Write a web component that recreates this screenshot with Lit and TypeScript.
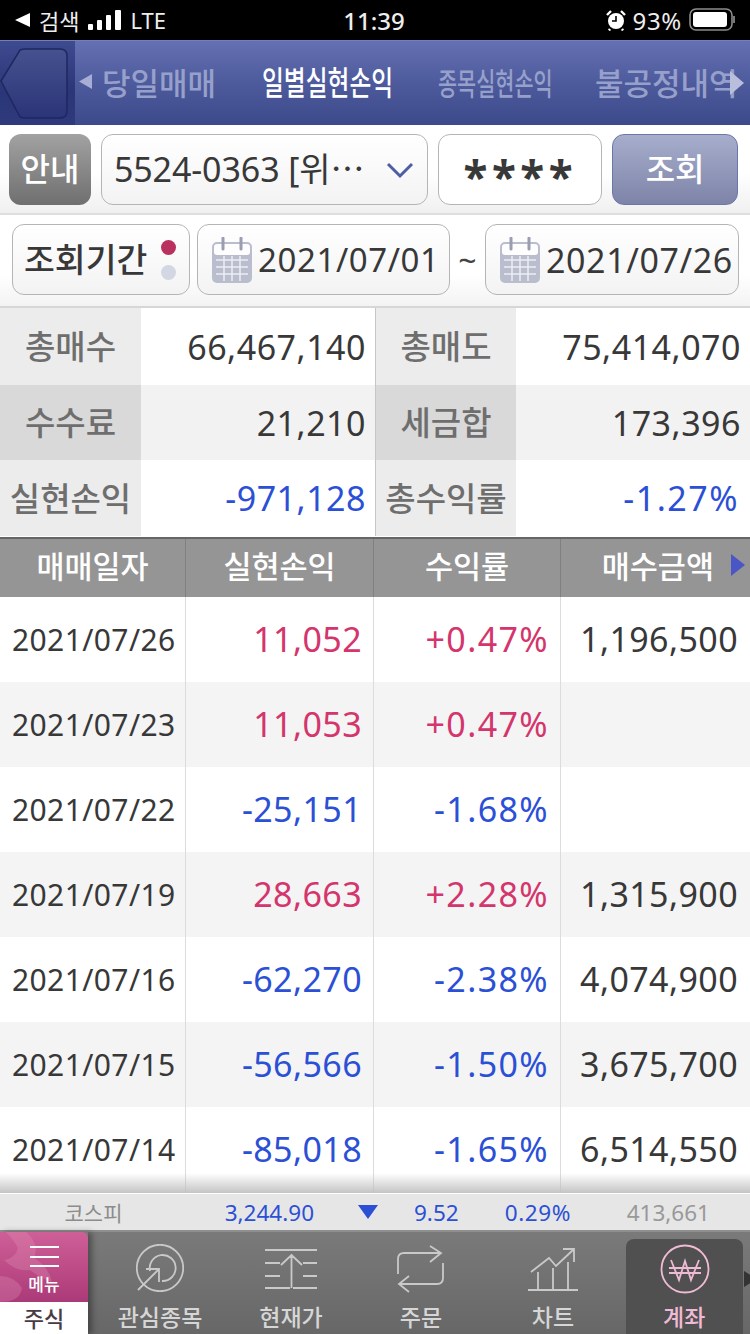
import { LitElement, css, html, svg } from "lit";
import { customElement } from "lit/decorators.js";

const summary = [
  ["총매수", "66,467,140", "", "총매도", "75,414,070", ""],
  ["수수료", "21,210", "", "세금합", "173,396", ""],
  ["실현손익", "-971,128", "down", "총수익률", "-1.27%", "down pc"],
];

const rows = [
  ["2021/07/26", "11,052", "+0.47%", "1,196,500"],
  ["2021/07/23", "11,053", "+0.47%", ""],
  ["2021/07/22", "-25,151", "-1.68%", ""],
  ["2021/07/19", "28,663", "+2.28%", "1,315,900"],
  ["2021/07/16", "-62,270", "-2.38%", "4,074,900"],
  ["2021/07/15", "-56,566", "-1.50%", "3,675,700"],
  ["2021/07/14", "-85,018", "-1.65%", "6,514,550"],
];

const calendar = html`<svg class="cal" width="40" height="46" viewBox="0 0 40 46">
  <rect x="0" y="5" width="40" height="41" rx="5" fill="#b9bdcd"></rect>
  <rect x="2" y="7" width="36" height="11" rx="3" fill="#fdfdfd"></rect>
  <path d="M4 23H36M4 30H36M4 37H36M12 19V44M20 19V44M28 19V44" stroke="#eceef3" stroke-width="1.5"></path>
  <path d="M11 1V12M29 1V12" stroke="#9a9eb0" stroke-width="3" stroke-linecap="round"></path>
</svg>`;

const navIcons = {
  watch: svg`<circle cx="24" cy="24" r="23.2"></circle>
    <path d="M14 27A13 13 0 1 1 26 37"></path>
    <path d="M2 46L22 26M10 25H23V38"></path>`,
  price: svg`<path d="M0 1H52M0 39H25M28 39H52M0 14H15M0 27H15M38 14H52M38 27H52M26.500 5V39M16 16L26.500 6L37 16"></path>`,
  order: svg`<path d="M33 1L44 8L33 17M44 8H7Q1 8 1 14V29M12 47L2 39L12 31M2 39H40Q46 39 46 33V18"></path>`,
  chart: svg`<path d="M0 42H50M10 42V24M25 42V20M40 42V14M3 24L21 10L28 18L45 2M35 1H46V14"></path>`,
};

@customElement("app-root")
export class AppRoot extends LitElement {
  static styles = css`
    :host {
      display: flex;
      flex-direction: column;
      width: 750px;
      height: 1334px;
      overflow: hidden;
      background: #fff;
      color: #383838;
      font-family: "Noto Sans", "Noto Sans CJK KR", sans-serif;
    }
    .status {
      height: 40px;
      flex: none;
      background: #000;
      color: #eee;
      display: grid;
      grid-template-columns: 1fr auto 1fr;
      align-items: center;
      padding: 0 13px 0 15px;
      font-size: 22px;
    }
    .status-left, .status-right { display: flex; align-items: center; }
    .status-left { gap: 7px; }
    .status-right { justify-content: flex-end; gap: 7px; }
    .search { font-size: 22px; margin: 0 2px 0 2px; }
    .lte { font-size: 22px; margin-left: 1px; }
    .time { font-size: 24px; font-weight: 500; margin-left: -4px; }
    .pct { font-size: 24px; letter-spacing: 0.7px; }
    .tabs {
      height: 85px;
      flex: none;
      display: flex;
      align-items: center;
      background: linear-gradient(#6470b2, #4d5a9c 50%, #3c4a8b);
      border-top: 1px solid #7480bb;
      box-sizing: border-box;
      overflow: hidden;
    }
    .back {
      width: 75px;
      height: 100%;
      flex: none;
      background: linear-gradient(#3f4b8f, #2b3678 60%, #2e3a7c);
    }
    .tab {
      display: flex;
      align-items: center;
      white-space: nowrap;
      color: #97a0cb;
      font-weight: 500;
      height: 100%;
      padding-bottom: 4px;
      box-sizing: border-box;
    }
    .squeeze { display: inline-block; transform-origin: left center; }
    .tab1 { width: 187px; padding-left: 4px; gap: 10px; font-size: 31px; }
    .tab2 { width: 176px; color: #fff; font-size: 33px; }
    .tab2 .squeeze { transform: scaleX(0.72); }
    .tab3 { width: 157px; font-size: 31px; }
    .tab3 .squeeze { transform: scaleX(0.67); }
    .tab4 { flex: 1; font-size: 31px; position: relative; }
    .tab4 svg { position: absolute; right: 6px; top: 50%; margin-top: -12px; }
    .tri { flex: none; }
    .toolbar {
      height: 90px;
      flex: none;
      box-sizing: border-box;
      display: flex;
      gap: 10px;
      align-items: flex-start;
      padding: 9px 12px 0 9px;
      background: linear-gradient(#fff 55%, #f0f0f0);
      border-bottom: 2px solid #dedede;
    }
    .box {
      box-sizing: border-box;
      height: 71px;
      border: 1px solid #b5b5b5;
      border-radius: 12px;
      background: linear-gradient(#fff, #f3f3f3);
      display: flex;
      align-items: center;
    }
    .info {
      width: 82px;
      justify-content: center;
      border: none;
      color: #fff;
      font-size: 32px;
      font-weight: 500;
      padding-bottom: 6px;
      background: linear-gradient(#a2a2a2, #6f6f6f);
    }
    .account {
      width: 328px;
      padding-left: 12px;
      justify-content: space-between;
      padding-right: 13px;
      font-size: 34px;
    }
    .account span { margin-top: -5px; letter-spacing: -0.1px; }
    .password {
      width: 164px;
      justify-content: center;
      background: #fff;
      font-size: 44px;
      font-weight: 700;
      letter-spacing: 4.5px;
      padding-top: 12px;
    }
    .query {
      width: 126px;
      justify-content: center;
      color: #fff;
      font-size: 32px;
      font-weight: 500;
      padding-bottom: 6px;
      border-color: #6b77a8;
      background: linear-gradient(#a7adcb, #7e84a8);
    }
    .dates {
      height: 93px;
      flex: none;
      box-sizing: border-box;
      display: flex;
      align-items: flex-start;
      padding: 9px 9px 0 12px;
      background: linear-gradient(#fff 65%, #f3f3f3);
      border-bottom: 2px solid #d6d6d6;
    }
    .period {
      width: 178px;
      margin-right: 7px;
      padding-left: 11px;
      gap: 14px;
      font-size: 33.500px;
      font-weight: 500;
    }
    .period span { margin-top: -4px; }
    .dots { display: flex; flex-direction: column; gap: 10px; }
    .dots i { width: 15px; height: 15px; border-radius: 50%; background: #d3d7e3; }
    .dots i:first-child { background: #b9325f; }
    .date {
      width: 254px;
      padding-left: 14px;
      gap: 6px;
      font-size: 34px;
      letter-spacing: 0.6px;
    }
    .date.first { width: 253px; font-size: 33px; }
    .cal { flex: none; }
    .tilde { width: 35px; text-align: center; font-size: 32px; color: #444; padding-top: 14px; }
    .summary {
      height: 229px;
      flex: none;
      display: grid;
      grid-template-columns: 141px 234px 1px 140px 234px;
      grid-template-rows: 77px 75px 76px;
      font-size: 34px;
      letter-spacing: 0.5px;
    }
    .summary > div { display: flex; align-items: center; }
    .label {
      justify-content: center;
      color: #6e6e6e;
      font-size: 33px;
      letter-spacing: 0;
      font-weight: 500;
      background: #ececec;
      padding-bottom: 3px;
      box-sizing: border-box;
    }
    .value { justify-content: flex-end; padding-right: 9px; background: #fff; }
    .value.pc { letter-spacing: 1.5px; padding-right: 11px; }
    .label.even { background: #d9d9d9; }
    .value.even { background: #f2f2f2; }
    .rule { background: #c6c6c6; }
    .down { color: #2b50d6; }
    .up { color: #d3356c; }
    .table { flex: 1; position: relative; overflow: hidden; display: flex; flex-direction: column; }
    .head, .row {
      display: grid;
      grid-template-columns: 186px 188px 187px 189px;
      flex: none;
    }
    .head {
      height: 60px;
      background: #959595;
      color: #fff;
      font-size: 30.5px;
      font-weight: 500;
      border-top: 2px solid #666;
      box-sizing: border-box;
    }
    .head div {
      display: flex;
      align-items: center;
      justify-content: center;
      gap: 17px;
      padding-bottom: 6px;
      border-right: 1px solid #808080;
    }
    .head div:last-child { border: none; justify-content: flex-end; padding-right: 5px; white-space: nowrap; }
    .row { height: 85px; font-size: 34px; letter-spacing: 0.4px; }
    .row:nth-child(odd) { background: #f4f4f4; }
    .row div {
      display: flex;
      align-items: center;
      justify-content: flex-end;
      padding-right: 11px;
      padding-bottom: 1px;
      border-right: 1px solid #dcdcdc;
    }
    .row div:first-child { justify-content: flex-start; padding: 0 0 0 12px; font-size: 30px; }
    .row div:nth-child(3) { letter-spacing: 1.4px; }
    .row div:last-child { border: none; padding-right: 12px; }
    .fade {
      position: absolute;
      left: 0;
      right: 0;
      bottom: 0;
      height: 20px;
      background: linear-gradient(rgba(190, 190, 190, 0), rgba(190, 190, 190, 0.9));
    }
    .ticker {
      height: 39px;
      flex: none;
      box-sizing: border-box;
      display: grid;
      grid-template-columns: 187px 127px 100px 43px 114px 1fr;
      align-items: center;
      background: #e6e6e6;
      border-top: 1px solid #fff;
      border-bottom: 2px solid #8f8f8f;
      font-size: 22.5px;
      color: #2b50d6;
    }
    .ticker span { text-align: right; white-space: nowrap; }
    .ticker span:nth-of-type(4) { letter-spacing: 0.6px; }
    .ticker .name { color: #8c8c8c; font-size: 21px; text-align: center; }
    .ticker .volume { color: #999; padding-right: 40px; }
    .ticker svg { justify-self: center; margin-left: 8px; }
    .nav {
      height: 102px;
      flex: none;
      display: flex;
      background: linear-gradient(#7a7a7a, #676767);
      color: #d6d6d6;
      font-size: 23px;
      font-weight: 500;
    }
    .stock { width: 88px; flex: none; display: flex; flex-direction: column; box-shadow: 4px 0 6px rgba(0, 0, 0, 0.35); }
    .menu {
      flex: 1;
      display: flex;
      flex-direction: column;
      align-items: center;
      padding-top: 14px;
      box-sizing: border-box;
      gap: 9px;
      color: #fff;
      font-size: 17px;
      line-height: 18px;
      border-top-right-radius: 6px;
      background: linear-gradient(#cf5f97, #ab3a78);
      position: relative;
      overflow: hidden;
    }
    .menu i { display: block; width: 29px; height: 21px; border-top: 2px solid #fff; border-bottom: 2px solid #fff; position: relative; box-sizing: border-box; z-index: 1; }
    .menu i::after { content: ""; position: absolute; left: 0; right: 0; top: 7.5px; height: 2px; background: #fff; }
    .menu span { position: relative; }
    .swirl { position: absolute; left: 0; top: 0; }
    .stock-label { height: 32px; background: #fff; color: #4a3a44; text-align: center; font-size: 22px; line-height: 32px; font-weight: 500; }
    .item {
      display: flex;
      flex-direction: column;
      align-items: center;
      flex: none;
      box-sizing: border-box;
      width: 130px;
      padding-top: 12px;
      position: relative;
    }
    .item span { position: absolute; bottom: 1px; line-height: 32px; }
    .item svg { fill: none; stroke: #c9c9c9; stroke-width: 1.8; }
    .i1 { margin-left: 7px; }
    .i2 { margin-left: 1px; padding-top: 17px; }
    .i3 { padding-top: 13px; }
    .i4 { margin-left: 2px; padding-top: 16px; }
    .active {
      width: 117px;
      margin: 7px 0 0 8px;
      padding-top: 5px;
      border-radius: 8px 8px 0 0;
      background: #505050;
      color: #f0bad4;
    }
    .item.active span { left: 37px; }
    .item.active svg { stroke: #f0bad4; }
    .item.active svg.more { position: absolute; stroke: none; right: -14px; top: 32px; }
  `;

  render() {
    return html`
      <div class="status">
        <div class="status-left">
          <svg width="15" height="14" viewBox="0 0 15 14"><path d="M0 7L15 0V14Z" fill="#fff"></path></svg>
          <span class="search">검색</span>
          <svg width="34" height="22" viewBox="0 0 34 22" fill="#fff">
            <rect x="0" y="15" width="5" height="6" rx="1"></rect>
            <rect x="9" y="11" width="5" height="10" rx="1"></rect>
            <rect x="18" y="6" width="5" height="15" rx="1"></rect>
            <rect x="27" y="1" width="6" height="20" rx="1"></rect>
          </svg>
          <span class="lte">LTE</span>
        </div>
        <div class="time">11:39</div>
        <div class="status-right">
          <svg width="20" height="22" viewBox="0 0 20 22">
            <circle cx="10" cy="12" r="8" fill="#fff"></circle>
            <path d="M10 7V12H6" stroke="#000" stroke-width="1.6" fill="none"></path>
            <path d="M1 6L5 2M19 6L15 2M4 20L3 21.500M16 20L17 21.500" stroke="#fff" stroke-width="2.4"></path>
          </svg>
          <span class="pct">93%</span>
          <svg width="48" height="24" viewBox="0 0 48 24">
            <rect x="1" y="1" width="42" height="21" rx="6" fill="none" stroke="#8c8c8c" stroke-width="1.6"></rect>
            <rect x="4" y="4" width="34" height="15" rx="3" fill="#fff"></rect>
            <path d="M45 8V15" stroke="#777" stroke-width="2"></path>
          </svg>
        </div>
      </div>

      <div class="tabs">
        <div class="back">
          <svg width="75" height="84" viewBox="0 0 75 84">
            <path d="M1 40L20 9Q22 8 26 8H60Q67 8 67 15V70Q67 77 60 77H26Q22 77 20 76Z" fill="url(#b)" stroke="#1e2760" stroke-width="1.500"></path>
            <defs><linearGradient id="b" x1="0" y1="0" x2="0" y2="1"><stop offset="0" stop-color="#46528f"></stop><stop offset="1" stop-color="#2a3478"></stop></linearGradient></defs>
          </svg>
        </div>
        <div class="tab tab1">
          <svg class="tri" width="13" height="15" viewBox="0 0 13 15"><path d="M0 7.500L13 0V15Z" fill="#a6aed5"></path></svg>
          <span>당일매매</span>
        </div>
        <div class="tab tab2"><span class="squeeze">일별실현손익</span></div>
        <div class="tab tab3"><span class="squeeze">종목실현손익</span></div>
        <div class="tab tab4">
          <span>불공정내역</span>
          <svg width="14" height="24" viewBox="0 0 14 24"><path d="M14 12L0 0V24Z" fill="#b9bedc"></path></svg>
        </div>
      </div>

      <div class="toolbar">
        <div class="box info">안내</div>
        <div class="box account">
          <span>5524-0363 [위⋯</span>
          <svg width="28" height="18" viewBox="0 0 28 18"><path d="M2 3L14 15L26 3" fill="none" stroke="#4d5da6" stroke-width="3"></path></svg>
        </div>
        <div class="box password">****</div>
        <div class="box query">조회</div>
      </div>

      <div class="dates">
        <div class="box period">
          <span>조회기간</span>
          <div class="dots"><i></i><i></i></div>
        </div>
        <div class="box date first">${calendar}<span>2021/07/01</span></div>
        <div class="tilde">~</div>
        <div class="box date">${calendar}<span>2021/07/26</span></div>
      </div>

      <div class="summary">
        ${summary.map((r, i) => {
          const even = i === 1 ? "even" : "";
          return html`
            <div class="label ${even}">${r[0]}</div>
            <div class="value ${even} ${r[2]}">${r[1]}</div>
            <div class="rule"></div>
            <div class="label ${even}">${r[3]}</div>
            <div class="value ${even} ${r[5]}">${r[4]}</div>
          `;
        })}
      </div>

      <div class="table">
        <div class="head">
          <div>매매일자</div>
          <div>실현손익</div>
          <div>수익률</div>
          <div>
            <span>매수금액</span>
            <svg width="14" height="22" viewBox="0 0 14 22"><path d="M14 11L0 0V22Z" fill="#4a55c6"></path></svg>
          </div>
        </div>
        ${rows.map((r) => {
          const cls = r[1].startsWith("-") ? "down" : "up";
          return html`<div class="row">
            <div>${r[0]}</div>
            <div class=${cls}>${r[1]}</div>
            <div class=${cls}>${r[2]}</div>
            <div>${r[3]}</div>
          </div>`;
        })}
        <div class="fade"></div>
      </div>

      <div class="ticker">
        <span class="name">코스피</span>
        <span>3,244.90</span>
        <svg width="20" height="14" viewBox="0 0 20 14"><path d="M0 0H20L10 14Z" fill="#2b50d6"></path></svg>
        <span>9.52</span>
        <span>0.29%</span>
        <span class="volume">413,661</span>
      </div>

      <div class="nav">
        <div class="stock">
          <div class="menu">
            <svg class="swirl" width="88" height="70" viewBox="0 0 88 70">
              <path d="M6 0H26Q40 12 34 26Q48 34 52 50Q40 46 30 38Q16 40 4 28Q16 26 18 16Q14 8 6 0ZM0 44Q14 44 22 56Q20 70 0 70Z" fill="#e79ac0" opacity="0.28"></path>
            </svg>
            <i></i><span>메뉴</span>
          </div>
          <div class="stock-label">주식</div>
        </div>
        <div class="item i1">
          <svg width="48" height="48" viewBox="0 0 48 48">${navIcons.watch}</svg>
          <span>관심종목</span>
        </div>
        <div class="item i2">
          <svg width="52" height="40" viewBox="0 0 52 40">${navIcons.price}</svg>
          <span>현재가</span>
        </div>
        <div class="item i3">
          <svg width="48" height="48" viewBox="0 0 48 48">${navIcons.order}</svg>
          <span>주문</span>
        </div>
        <div class="item i4">
          <svg width="50" height="44" viewBox="0 0 50 44">${navIcons.chart}</svg>
          <span>차트</span>
        </div>
        <div class="item active">
          <svg width="50" height="50" viewBox="0 0 50 50">
            <circle cx="25" cy="25" r="23.5"></circle>
            <path d="M11 16L19 36L25 17L31 36L39 16M9 24H41M9 29H41"></path>
          </svg>
          <span>계좌</span>
          <svg class="more" width="13" height="16" viewBox="0 0 13 16"><path d="M0 0L13 8L0 16Z" fill="#333"></path></svg>
        </div>
      </div>
    `;
  }
}
